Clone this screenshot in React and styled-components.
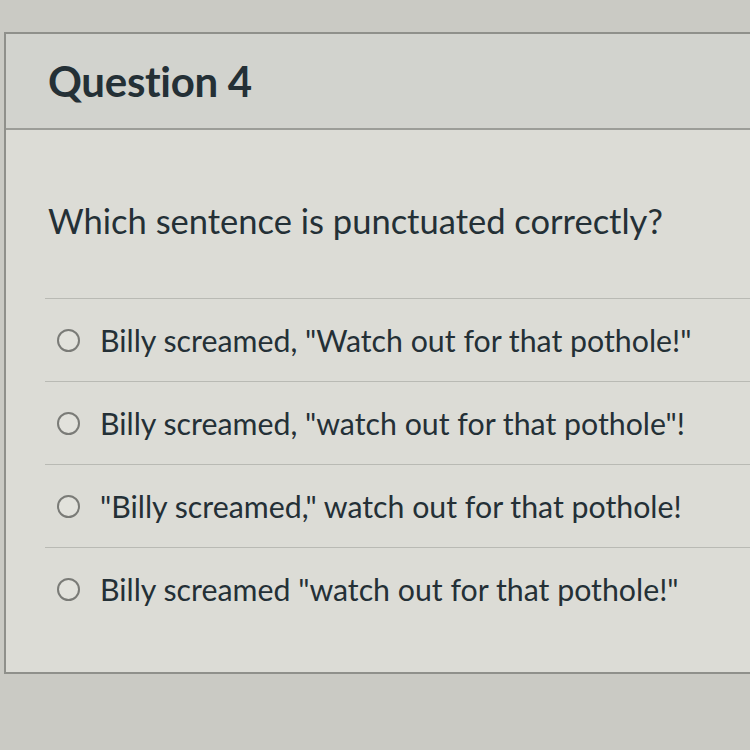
import React from 'react';
import styled, { createGlobalStyle } from 'styled-components';

const GlobalStyle = createGlobalStyle`
  html, body {
    margin: 0;
    padding: 0;
    background: #cacac4;
  }
`;

const Page = styled.div`
  width: 750px;
  height: 750px;
  overflow: hidden;
  padding-top: 32px;
  padding-left: 4px;
  box-sizing: border-box;
  background: #cacac4;
  font-family: Lato, "Liberation Sans", sans-serif;
  color: #243036;
`;

const Card = styled.div`
  width: 800px;
  border: 2px solid #8f908b;
  border-right: none;
  background: #dcdcd6;
`;

const Header = styled.div`
  height: 94px;
  display: flex;
  align-items: center;
  padding-left: 42px;
  background: #d2d3ce;
  border-bottom: 2px solid #9c9d98;
`;

const Title = styled.h2`
  margin: 0;
  font-size: 42px;
  font-weight: 700;
  letter-spacing: -0.3px;
`;

const Prompt = styled.div`
  height: 168px;
  display: flex;
  align-items: center;
  padding: 12px 0 0 42px;
  box-sizing: border-box;
  font-size: 34.5px;
`;

const Options = styled.ul`
  list-style: none;
  margin: 0 0 0 39px;
  padding: 0;
`;

const Option = styled.li`
  height: 82px;
  display: flex;
  align-items: center;
  border-top: 1px solid #b9bab4;
  padding-left: 12px;
  padding-bottom: ${p => (p.$last ? '42px' : '0')};
  font-size: 30.3px;
  line-height: 1;
`;

const Radio = styled.span`
  width: 19px;
  height: 19px;
  border: 2px solid #7a7b77;
  border-radius: 50%;
  background: #e2e2dc;
  margin-right: 20px;
  flex-shrink: 0;
`;

const answers = [
  'Billy screamed, "Watch out for that pothole!"',
  'Billy screamed, "watch out for that pothole"!',
  '"Billy screamed," watch out for that pothole!',
  'Billy screamed "watch out for that pothole!"',
];

export default function App() {
  return (
    <Page>
      <GlobalStyle />
      <Card>
        <Header>
          <Title>Question 4</Title>
        </Header>
        <Prompt>Which sentence is punctuated correctly?</Prompt>
        <Options>
          {answers.map((a, i) => (
            <Option key={i} $last={i === answers.length - 1}>
              <Radio />
              {a}
            </Option>
          ))}
        </Options>
      </Card>
    </Page>
  );
}
